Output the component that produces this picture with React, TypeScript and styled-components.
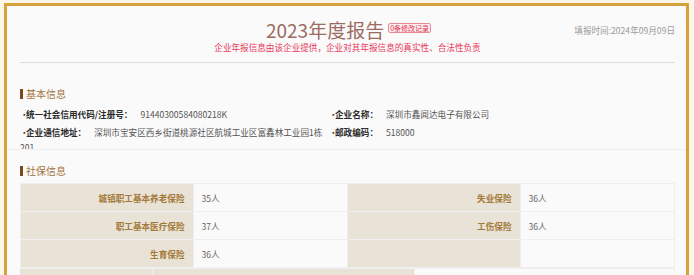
import styled, { createGlobalStyle } from "styled-components";

const GlobalStyle = createGlobalStyle`
  body {
    margin: 0;
    background: #fcf5e8;
    font-family: "Noto Sans CJK SC", "Noto Sans", sans-serif;
  }
`;

const basicInfo = [
  { label: "统一社会信用代码/注册号：", value: "91440300584080218K" },
  { label: "企业名称：", value: "深圳市鑫闻达电子有限公司" },
  { label: "企业通信地址：", value: "深圳市宝安区西乡街道桃源社区航城工业区富鑫林工业园1栋201" },
  { label: "邮政编码：", value: "518000" },
];

const socialRows = [
  ["城镇职工基本养老保险", "35人", "失业保险", "36人"],
  ["职工基本医疗保险", "37人", "工伤保险", "36人"],
  ["生育保险", "36人", "", ""],
];

export default function App() {
  return (
    <>
      <GlobalStyle />
      <Frame>
        <Header>
          <span />
          <TitleBlock>
            <TitleLine>
              <Title>2023年度报告</Title>
              <Badge>0条修改记录</Badge>
            </TitleLine>
            <Notice>企业年报信息由该企业提供，企业对其年报信息的真实性、合法性负责</Notice>
          </TitleBlock>
          <DateText>填报时间:2024年09月09日</DateText>
        </Header>
        <Divider />

        <Section $bordered>
          <Heading $top={24}>基本信息</Heading>
          <InfoGrid>
            {basicInfo.map(item => (
              <InfoItem key={item.label}>
                <Dot>·</Dot>
                <InfoLabel>{item.label}</InfoLabel>
                <InfoValue>{item.value}</InfoValue>
              </InfoItem>
            ))}
          </InfoGrid>
        </Section>

        <Section>
          <Heading $top={14}>社保信息</Heading>
          <Table>
            <tbody>
              {socialRows.map(row => (
                <tr key={row[0]}>
                  <LabelCell>{row[0]}</LabelCell>
                  <ValueCell>{row[1]}</ValueCell>
                  <LabelCell>{row[2]}</LabelCell>
                  <ValueCell>{row[3]}</ValueCell>
                </tr>
              ))}
            </tbody>
          </Table>
          <NextTable>
            <NextCell $w={132} $beige />
            <NextCell $w={261} $beige />
            <NextCell />
          </NextTable>
        </Section>
      </Frame>
    </>
  );
}

const Frame = styled.div`
  margin: 3px 5px 0 4px;
  border: 3px solid #d5a13c;
  border-bottom: none;
  background: #fafafa;
  min-height: 300px;
`;

const Header = styled.div`
  display: grid;
  grid-template-columns: 1fr auto 1fr;
  padding: 12px 11px 0 13px;
`;

const TitleBlock = styled.div`
  display: flex;
  flex-direction: column;
  align-items: center;
`;

const TitleLine = styled.div`
  display: flex;
  align-items: flex-start;
  gap: 4px;
  padding-left: 2px;
`;

const Title = styled.h1`
  margin: 0;
  font-size: 19px;
  line-height: 24px;
  font-weight: 400;
  color: #9c6a60;
`;

const Badge = styled.span`
  margin-top: 5px;
  padding: 0 1px;
  font-size: 7px;
  line-height: 8px;
  color: #e2334f;
  background: #fdeef0;
  border: 1px solid #e88a98;
  border-radius: 2px;
`;

const Notice = styled.p`
  margin: 0;
  font-size: 8.6px;
  line-height: 11.5px;
  color: #e7385b;
`;

const DateText = styled.span`
  justify-self: end;
  margin-top: 7px;
  font-size: 8.6px;
  line-height: 11px;
  color: #9a9a9a;
`;

const Divider = styled.hr`
  margin: 8px 11px 0 13px;
  border: none;
  border-top: 1px solid #dedede;
`;

const Section = styled.section<{ $bordered?: boolean }>`
  padding: 0 11px 0 13px;
  border-bottom: ${p => (p.$bordered ? "1px solid #efefef" : "none")};
`;

const Heading = styled.h2<{ $top: number }>`
  display: flex;
  align-items: center;
  margin: ${p => p.$top}px 0 0;
  font-size: 10px;
  line-height: 14px;
  font-weight: 400;
  color: #a3733d;

  &::before {
    content: "";
    width: 3px;
    height: 10px;
    margin-right: 3px;
    background: #7a4a1c;
  }
`;

const InfoGrid = styled.div`
  display: grid;
  grid-template-columns: 309px 1fr;
  row-gap: 3px;
  margin-top: 6.5px;
  height: 42px;
  overflow: hidden;
`;

const InfoItem = styled.div`
  font-size: 8.6px;
  line-height: 15px;
`;

const Dot = styled.span`
  display: inline-block;
  width: 5px;
  margin-right: 1px;
  color: #333;
`;

const InfoLabel = styled.b`
  color: #2b2b2b;
  font-weight: 700;
  margin-right: 8px;
`;

const InfoValue = styled.span`
  color: #555;
`;

const Table = styled.table`
  width: 100%;
  margin-top: 5px;
  border-collapse: collapse;
  table-layout: fixed;
  font-size: 8.6px;

  td {
    height: 27px;
    border: 1px solid #efefef;
  }
`;

const LabelCell = styled.td`
  width: 25%;
  padding: 0 8px 0 0;
  text-align: right;
  font-weight: 700;
  color: #a47a39;
  background: #e9e2d6;
`;

const ValueCell = styled.td`
  padding: 0 0 0 8px;
  color: #666;
`;

const NextTable = styled.div`
  display: flex;
  height: 20px;
  border-top: 1px solid #efefef;
`;

const NextCell = styled.div<{ $w?: number; $beige?: boolean }>`
  flex: ${p => (p.$w ? `0 0 ${p.$w}px` : "1")};
  background: ${p => (p.$beige ? "#e9e2d6" : "transparent")};
  border-right: 1px solid #efefef;
`;
